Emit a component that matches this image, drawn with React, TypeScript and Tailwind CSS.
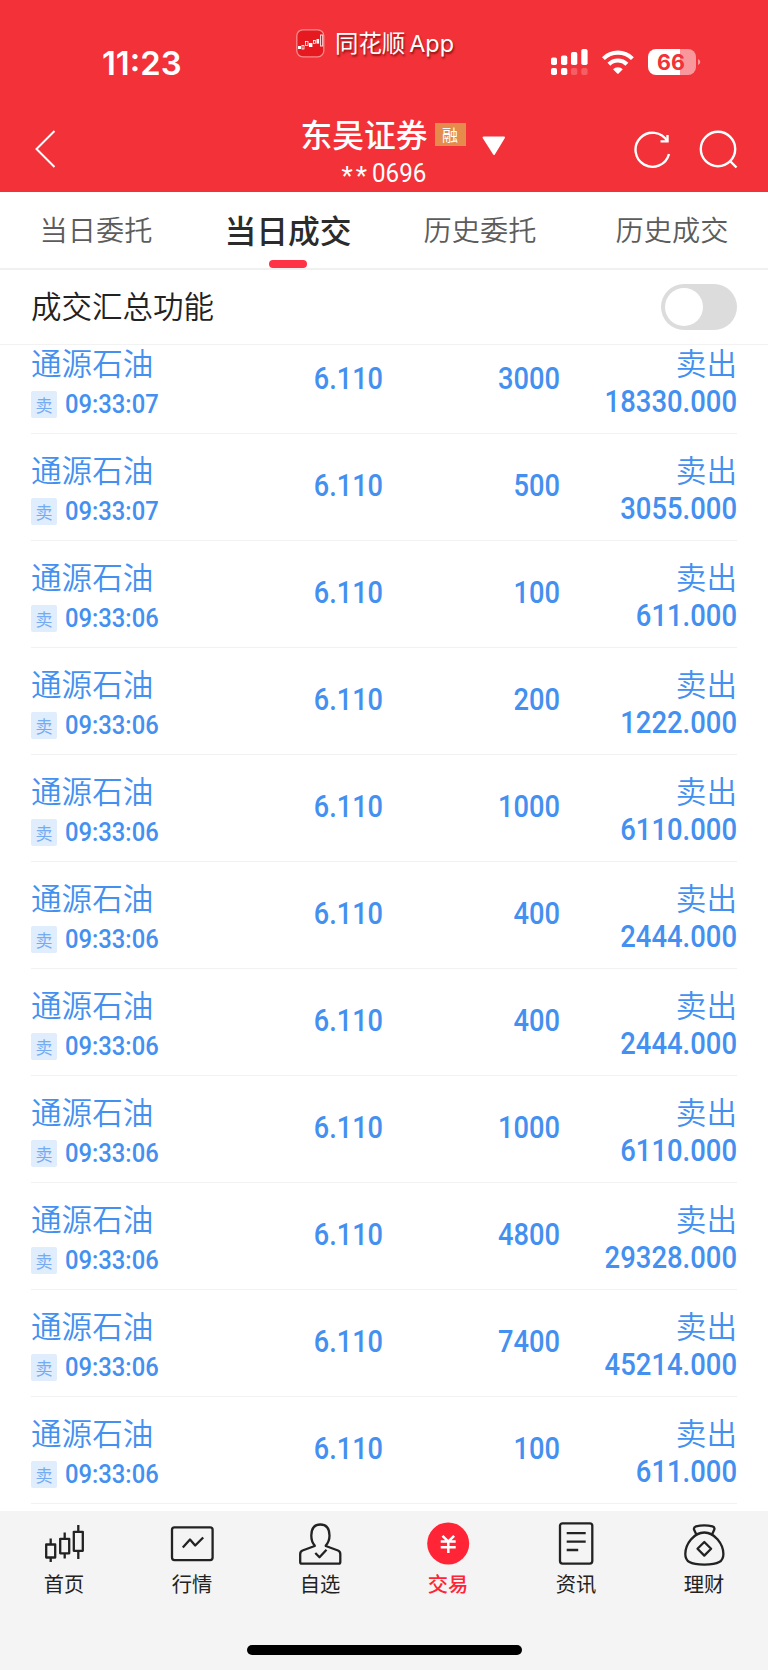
import { ReactNode, useState } from "react";

interface Trade {
    time: string;
    price: string;
    quantity: string;
    amount: string;
}

const trades: Trade[] = [
    { time: "09:33:07", price: "6.110", quantity: "3000", amount: "18330.000" },
    { time: "09:33:07", price: "6.110", quantity: "500", amount: "3055.000" },
    { time: "09:33:06", price: "6.110", quantity: "100", amount: "611.000" },
    { time: "09:33:06", price: "6.110", quantity: "200", amount: "1222.000" },
    { time: "09:33:06", price: "6.110", quantity: "1000", amount: "6110.000" },
    { time: "09:33:06", price: "6.110", quantity: "400", amount: "2444.000" },
    { time: "09:33:06", price: "6.110", quantity: "400", amount: "2444.000" },
    { time: "09:33:06", price: "6.110", quantity: "1000", amount: "6110.000" },
    { time: "09:33:06", price: "6.110", quantity: "4800", amount: "29328.000" },
    { time: "09:33:06", price: "6.110", quantity: "7400", amount: "45214.000" },
    { time: "09:33:06", price: "6.110", quantity: "100", amount: "611.000" },
];

const tabs = ["当日委托", "当日成交", "历史委托", "历史成交"];

function StatusIcons() {
    return (
        <svg width="152" height="30" viewBox="550 47 152 30" fill="white">
            <rect x="551" y="57.5" width="6" height="7.5" rx="1.8" />
            <rect x="561" y="55.5" width="6.3" height="9.5" rx="1.8" />
            <rect x="571" y="52" width="6.3" height="13" rx="1.8" />
            <rect x="581.3" y="49" width="6.3" height="16" rx="1.8" />
            <rect x="551" y="68" width="6" height="7" rx="1.8" />
            <rect x="561" y="68" width="6.3" height="7" rx="1.8" />
            <rect x="571" y="68" width="6.3" height="7" rx="1.8" opacity=".22" />
            <rect x="581.3" y="68" width="6.3" height="7" rx="1.8" opacity=".22" />
            <g fill="none" stroke="white" strokeWidth="4.1">
                <path d="M603.4 58.6a20.6 20.6 0 0 1 29 0" />
                <path d="M608.9 64.2a12.8 12.8 0 0 1 18 0" />
            </g>
            <path d="M613 69.2a7 7 0 0 1 9.8 0l-4.2 4.2q-.7.6-1.4 0z" />
            <path d="M656 49h24v26h-24a8 8 0 0 1-8-8V57a8 8 0 0 1 8-8z" />
            <path d="M680 49h8a8 8 0 0 1 8 8v10a8 8 0 0 1-8 8h-8z" opacity=".5" />
            <path d="M698 59q2.300.8 2.300 3t-2.300 3z" opacity=".5" />
            <text
                x="671"
                y="70"
                textAnchor="middle"
                fill="#f23138"
                fontSize="21.5"
                fontWeight="700"
                fontFamily="Inter, sans-serif"
            >
                66
            </text>
        </svg>
    );
}

function StatusBar() {
    return (
        <div className="grid h-[96px] grid-cols-[1fr_auto_1fr]">
            <div className="pt-[43px] pl-[102px] font-['Inter',sans-serif] text-[32.8px] leading-[40px] font-semibold">
                11:23
            </div>
            <div className="mt-[28px] mr-[18px] flex h-[30px] items-center gap-[10px]">
                <svg width="29" height="29" viewBox="0 0 29 29" fill="none" stroke="white">
                    <rect x=".8" y=".8" width="27" height="27" rx="6" fill="#e5191f" stroke="#f88a8c" strokeWidth="1.300" />
                    <rect x="2" y="17" width="3" height="3" fill="white" stroke="none" />
                    <rect x="6" y="16.500" width="2" height="3.500" strokeWidth=".8" />
                    <rect x="9.500" y="12.500" width="2.500" height="4" strokeWidth=".8" />
                    <rect x="13" y="14" width="3.400" height="4" fill="white" stroke="none" />
                    <rect x="17.500" y="11.500" width="1.800" height="3" strokeWidth=".8" />
                    <rect x="20.500" y="10" width="2.600" height="4.600" fill="white" stroke="none" />
                    <rect x="24.500" y="6" width="2.200" height="11" strokeWidth=".8" />
                </svg>
                <span className="text-[23.4px] leading-[30px] whitespace-nowrap [text-shadow:1px_2px_2px_rgba(90,0,0,0.65)]">
                    同花顺
                    <span className="ml-1 font-['Inter',sans-serif] text-[23.4px]">App</span>
                </span>
            </div>
            <div className="-ml-[18px] flex justify-end pt-[47px] pr-[66px]">
                <StatusIcons />
            </div>
        </div>
    );
}

function TitleBar() {
    return (
        <div className="grid h-[96px] grid-cols-[1fr_auto_1fr]">
            <div className="pt-[33px] pl-[34px]">
                <svg width="23" height="40" viewBox="0 0 23 40" fill="none" stroke="white" strokeWidth="2">
                    <path d="M20.500 2L2.500 20l18 18" />
                </svg>
            </div>
            <div className="flex flex-col items-center pt-[17px]">
                <div className="mr-[2px] flex items-center gap-[7px]">
                    <span className="text-[31.8px] leading-[40px] font-medium">东吴证券</span>
                    <span className="mt-[2px] flex h-[23px] w-[31px] items-center justify-center bg-[#e58c4c] text-[16px] leading-[21px]">
                        融
                    </span>
                </div>
                <span className="mt-[2px] flex h-[30px] items-center font-['Roboto',sans-serif] text-[26px] leading-[30px]">
                    <span className="mt-[11px] mr-[2px] tracking-[3px]">**</span>
                    <span className="mt-[6px] -mr-[4px] origin-left scale-x-[0.93]">0696</span>
                </span>
            </div>
            <div className="flex items-start pl-[14px]">
                <svg className="mt-[40px]" width="24" height="20" viewBox="0 0 24 20">
                    <path d="M1.500 1.500h20.500L12 18z" fill="white" stroke="white" strokeWidth="2" strokeLinejoin="round" />
                </svg>
                <svg className="mt-[33px] ml-auto" width="40" height="40" viewBox="0 0 40 40" fill="none" stroke="white" strokeWidth="2.400">
                    <path d="M34.200 12.200A17 17 0 1 0 36 25" />
                    <path d="M27.500 12.400h7V6" />
                </svg>
                <svg className="mt-[33px] mr-[29px] ml-[25px]" width="41" height="40" viewBox="0 0 41 40" fill="none" stroke="white" strokeWidth="2.400">
                    <circle cx="20" cy="20" r="17.200" />
                    <path d="M31.500 31.500l7 7" />
                </svg>
            </div>
        </div>
    );
}

function TradeRow({ trade }: { trade: Trade }) {
    return (
        <div className="grid h-[107px] grid-cols-[250px_102px_177px_1fr] border-b-[1.5px] border-[#f2f2f3]">
            <div className="pt-[15px]">
                <div className="text-[30.6px] leading-[40px] font-[350]">通源石油</div>
                <div className="mt-[9px] flex items-center gap-2">
                    <span className="flex h-[27px] w-[26px] items-center justify-center rounded-[2px] bg-[#e0edfd] text-[17px] leading-[27px] text-[#74acf3]">
                        卖
                    </span>
                    <span className="mb-px origin-left scale-x-[0.915] font-['Roboto',sans-serif] text-[26px] leading-[26px] font-medium">
                        {trade.time}
                    </span>
                </div>
            </div>
            <span className="origin-right scale-x-[0.875] pt-[32px] text-right font-['Roboto',sans-serif] text-[31px] leading-[40px] font-medium">
                {trade.price}
            </span>
            <span className="origin-right scale-x-[0.88] pt-[32px] text-right font-['Roboto',sans-serif] text-[31px] leading-[40px] font-medium">
                {trade.quantity}
            </span>
            <div className="pt-[15px] text-right">
                <div className="text-[30.6px] leading-[40px] font-[350]">卖出</div>
                <div className="mt-[6px] origin-right scale-x-[0.885] font-['Roboto',sans-serif] text-[31px] leading-[28px] font-medium">
                    {trade.amount}
                </div>
            </div>
        </div>
    );
}

function NavIcon({ children }: { children: ReactNode }) {
    return (
        <svg
            width="44"
            height="44"
            viewBox="0 0 44 44"
            fill="none"
            stroke="#222"
            strokeWidth="2.3"
            strokeLinejoin="round"
        >
            {children}
        </svg>
    );
}

const navItems: { label: string; active?: boolean; icon: ReactNode }[] = [
    {
        label: "首页",
        icon: (
            <>
                <rect x="4.200" y="22.500" width="9" height="13" />
                <path d="M8.700 16.500v6M8.700 35.500v4.500" />
                <rect x="18.200" y="16.800" width="9" height="14.500" />
                <path d="M22.700 10.500v6M22.700 31.500v5" />
                <rect x="31.800" y="9.800" width="9" height="19" />
                <path d="M36.300 3v7M36.300 29v8" />
            </>
        ),
    },
    {
        label: "行情",
        icon: (
            <>
                <rect x="2" y="5.300" width="40.600" height="32.800" rx="2.500" />
                <path d="M12.800 25.500l7.200-8 5.200 6L33.200 15.500" />
            </>
        ),
    },
    {
        label: "自选",
        icon: (
            <>
                <path d="M16.700 23.500C13.500 20 13.300 17 13.300 13.500C13.300 6 16.800 2.500 22.300 2.500S31.500 6 31.500 13.500C31.500 17 31 20 27.800 23.500V24L40 28.500Q42.300 29.500 42.300 32V40Q42.300 41.700 40.500 41.700H4Q2.200 41.700 2.200 40V32Q2.200 29.500 4.500 28.500L16.700 24z" />
                <path d="M17.300 31l4.200 4.300 7-7.500" />
            </>
        ),
    },
    {
        label: "交易",
        active: true,
        icon: (
            <>
                <circle cx="22.200" cy="21.500" r="21" fill="#ff2436" stroke="none" />
                <path d="M16.500 13.800l5.800 5.800 5.800-5.800M22.300 19.500v11.500M14.700 19.500h15M14.700 25.200h15" stroke="white" strokeWidth="2.500" />
            </>
        ),
    },
    {
        label: "资讯",
        icon: (
            <>
                <rect x="6" y="1.300" width="32.300" height="40.300" rx="2.500" />
                <path d="M12.700 11.200h19M12.700 19.600h19M12.700 28h11.500" />
            </>
        ),
    },
    {
        label: "理财",
        icon: (
            <>
                <path d="M14.800 13.500L12 7.500Q11.500 5.200 14 4.300Q22.300 2.300 30.500 4.300Q33 5.200 32.300 7.500L29.600 13.500" />
                <path d="M22.300 10.500C12 10.500 3.300 22 3.300 32C3.300 39.500 8 42.600 22.300 42.600S41.400 39.500 41.400 32C41.400 22 32.500 10.500 22.300 10.500z" />
                <path d="M22.300 20l6.800 6.800-6.800 6.800-6.800-6.800z" />
            </>
        ),
    },
];

export default function App() {
    const [activeTab, setActiveTab] = useState(1);
    const [summary, setSummary] = useState(false);

    return (
        <div className="flex h-[1670px] w-[768px] flex-col overflow-hidden bg-white font-['Noto_Sans_CJK_SC',sans-serif]">
            <header className="h-[192px] shrink-0 bg-[#f23138] text-white">
                <StatusBar />
                <TitleBar />
            </header>

            <nav className="grid h-[78px] shrink-0 grid-cols-4 border-b-2 border-[#f0f0f1]">
                {tabs.map((tab, i) => (
                    <button
                        key={tab}
                        type="button"
                        onClick={() => setActiveTab(i)}
                        className={
                            i === activeTab
                                ? "flex flex-col items-center pt-[15px] text-[31.8px] leading-[44px] font-medium text-[#2b2b2b]"
                                : "flex flex-col items-center pt-[15px] text-[28.2px] leading-[44px] font-[350] text-[#5c5c5c]"
                        }
                    >
                        {tab}
                        {i === activeTab && <span className="mt-[9px] h-[8px] w-[38px] rounded-full bg-[#ff3346]" />}
                    </button>
                ))}
            </nav>

            <div className="flex h-[75px] shrink-0 items-center justify-between border-b border-[#f2f2f3] px-[31px]">
                <span className="mb-[4px] text-[30.5px] leading-[40px] font-[350] text-[#222]">成交汇总功能</span>
                <button
                    type="button"
                    onClick={() => setSummary(!summary)}
                    className={
                        summary
                            ? "mb-px flex h-[46px] w-[76px] items-center justify-end rounded-full bg-[#ff3346] px-1"
                            : "mb-px flex h-[46px] w-[76px] items-center rounded-full bg-[#dcdcdc] px-1"
                    }
                >
                    <span className="h-[38px] w-[38px] rounded-full bg-white" />
                </button>
            </div>

            {/* Lista desplazada: la primera fila queda pegada a la barra */}
            <main className="h-[1166px] shrink-0 px-[31px] text-[#4390f0]">
                <div className="-mt-[18px]">
                    {trades.map((trade, i) => (
                        <TradeRow key={i} trade={trade} />
                    ))}
                </div>
            </main>

            <footer className="flex grow flex-col items-center bg-[#f4f4f4]">
                <div className="grid w-full grid-cols-6 pt-[11px]">
                    {navItems.map((item) => (
                        <div key={item.label} className="flex flex-col items-center">
                            <NavIcon>{item.icon}</NavIcon>
                            <span
                                className={
                                    item.active
                                        ? "mt-[2px] text-[20.3px] leading-[30px] font-medium text-[#ff2436]"
                                        : "mt-[2px] text-[20.3px] leading-[30px] text-[#222]"
                                }
                            >
                                {item.label}
                            </span>
                        </div>
                    ))}
                </div>
                <div className="mt-[47px] h-[10px] w-[275px] rounded-full bg-black" />
            </footer>
        </div>
    );
}
